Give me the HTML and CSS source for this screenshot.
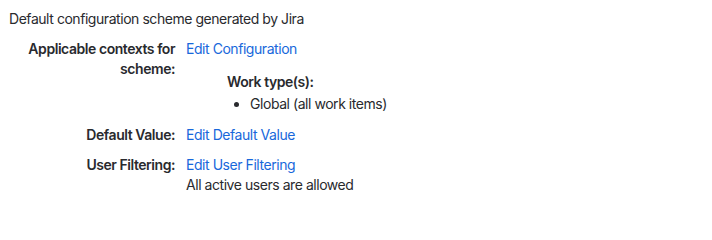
FILE: index.html
```html
<!DOCTYPE html>
<html lang="en">
<head>
<meta charset="utf-8">
<title>Field configuration</title>
<link rel="stylesheet" href="styles.css">
</head>
<body>
<div class="scheme">
  <p class="desc">Default configuration scheme generated by Jira</p>
  <dl class="props">
    <dt>Applicable contexts for scheme:</dt>
    <dd>
      <a href="#">Edit Configuration</a>
      <div class="ctx">
        <h4>Work type(s):</h4>
        <ul>
          <li>Global (all work items)</li>
        </ul>
      </div>
    </dd>
    <dt>Default Value:</dt>
    <dd><a href="#">Edit Default Value</a></dd>
    <dt>User Filtering:</dt>
    <dd>
      <a href="#">Edit User Filtering</a>
      <div>All active users are allowed</div>
    </dd>
  </dl>
</div>
</body>
</html>
```
FILE: styles.css
```css
html, body {
  margin: 0;
  background: #ffffff;
}
body {
  padding: 9px 9px;
  font-family: Inter, "Noto Sans", "Liberation Sans", sans-serif;
  font-size: 14px;
  line-height: 20px;
  letter-spacing: -0.45px;
  color: #292a2e;
}
.desc {
  margin: 0 0 10px;
}
.props {
  display: grid;
  grid-template-columns: 166px 1fr;
  column-gap: 11px;
  row-gap: 10px;
  margin: 0;
}
.props dt {
  margin: 0;
  text-align: right;
  font-weight: 600;
  color: #292a2e;
}
.props dd {
  margin: 0;
}
.props a {
  color: #1868db;
  text-decoration: none;
}
.ctx {
  padding-left: 41px;
  margin-top: 13px;
}
.ctx h4 {
  margin: 0 0 2px;
  font-size: 14px;
  font-weight: 600;
}
.ctx ul {
  margin: 0 0 1px;
  padding-left: 23px;
}
```
